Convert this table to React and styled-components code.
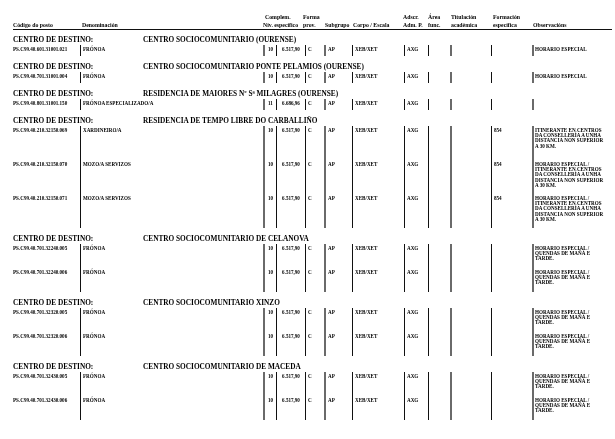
import React from "react";
import styled, { createGlobalStyle } from "styled-components";

const GlobalStyle = createGlobalStyle`
  html, body {
    margin: 0;
    padding: 0;
    background: #ffffff;
  }
  body {
    font-family: "Liberation Serif", "Times New Roman", serif;
    color: #000;
  }
`;

const COLS = "67px 183px 13px 29px 19px 28px 52px 24px 22px 41px 41px 1fr";

const Page = styled.div`
  width: 615px;
  box-sizing: border-box;
  padding: 13px 3px 0 13px;
  display: flex;
  flex-direction: column;
  gap: 4px;
  will-change: transform;
`;

const HeaderBar = styled.div`
  display: grid;
  grid-template-columns: 68px 182px 39px 22px 28px 51px 24px 24px 42px 39px 1fr;
  border-bottom: 1px solid #111;
  margin-bottom: -1px;
`;

const HeadCell = styled.div`
  height: 16px;
  display: flex;
  flex-direction: column;
  justify-content: flex-end;
  font-size: 5.8px;
  font-weight: bold;
  line-height: 8px;
  white-space: nowrap;
  padding-left: ${(p) => p.$pad || 0}px;
`;

const Section = styled.section`
  display: flex;
  flex-direction: column;
`;

const SectionTitle = styled.div`
  height: 12px;
  display: flex;
  align-items: center;
  font-family: "Liberation Serif", "Times New Roman", serif;
  font-size: 7.3px;
  font-weight: bold;
  white-space: nowrap;
`;

const TitleLabel = styled.span`
  width: 130px;
`;

const Row = styled.div`
  display: grid;
  grid-template-columns: ${COLS};
  height: ${(p) => p.$h}px;
  font-size: 5.1px;
  font-weight: bold;
  line-height: 5.4px;
`;

const Cell = styled.div`
  box-sizing: border-box;
  padding-top: 1.5px;
  padding-left: ${(p) => p.$pad || 0}px;
  text-align: ${(p) => p.$align || "left"};
  white-space: nowrap;
  border-left: ${(p) =>
    p.$bar === "double"
      ? "2px solid #6a6a6a"
      : p.$bar === "single"
      ? "1px solid #111"
      : "none"};
`;

const ObsText = styled.div`
  width: 14em;
  white-space: normal;
`;

const heads = [
  { top: "", bottom: "Código do posto" },
  { top: "", bottom: "Denominación", pad: 1 },
  { top: "Complem.", bottom: "Nív. específico", topPad: 2 },
  { top: "Forma", bottom: "prov.", pad: 1 },
  { top: "", bottom: "Subgrupo", pad: 1 },
  { top: "", bottom: "Corpo / Escala", pad: 1 },
  { top: "Adscr.", bottom: "Adm. P." },
  { top: "Área", bottom: "func.", pad: 1 },
  { top: "Titulación", bottom: "académica" },
  { top: "Formación", bottom: "específica" },
  { top: "", bottom: "Observacións", pad: 1 },
];

const ITIN =
  "ITINERANTE EN CENTROS DA CONSELLERÍA A UNHA DISTANCIA NON SUPERIOR A 30 KM.";
const QUEND = "HORARIO ESPECIAL / QUENDAS DE MAÑÁ E TARDE.";

const fronoa = (code, h = 24) => ({
  code,
  name: "FRÓNOA",
  niv: "10",
  comp: "6.517,90",
  form: "",
  obs: QUEND,
  h,
});

const sections = [
  {
    title: "CENTRO SOCIOCOMUNITARIO (OURENSE)",
    rows: [{ ...fronoa("PS.C99.40.601.31001.021", 11), obs: "HORARIO ESPECIAL" }],
  },
  {
    title: "CENTRO SOCIOCOMUNITARIO PONTE PELAMIOS (OURENSE)",
    rows: [{ ...fronoa("PS.C99.40.701.31001.004", 11), obs: "HORARIO ESPECIAL" }],
  },
  {
    title: "RESIDENCIA DE MAIORES Nº Sª MILAGRES (OURENSE)",
    rows: [
      {
        code: "PS.C99.40.801.31001.150",
        name: "FRÓNOA ESPECIALIZADO/A",
        niv: "11",
        comp: "6.686,96",
        form: "",
        obs: "",
        h: 11,
      },
    ],
  },
  {
    title: "RESIDENCIA DE TEMPO LIBRE DO CARBALLIÑO",
    rows: [
      { code: "PS.C99.40.210.32150.069", name: "XARDINEIRO/A", niv: "10", comp: "6.517,90", form: "854", obs: ITIN, h: 34 },
      { code: "PS.C99.40.210.32150.070", name: "MOZO/A SERVIZOS", niv: "10", comp: "6.517,90", form: "854", obs: "HORARIO ESPECIAL / " + ITIN, h: 34 },
      { code: "PS.C99.40.210.32150.071", name: "MOZO/A SERVIZOS", niv: "10", comp: "6.517,90", form: "854", obs: "HORARIO ESPECIAL / " + ITIN, h: 34 },
    ],
  },
  {
    title: "CENTRO SOCIOCOMUNITARIO DE CELANOVA",
    rows: [fronoa("PS.C99.40.701.32240.005"), fronoa("PS.C99.40.701.32240.006")],
  },
  {
    title: "CENTRO SOCIOCOMUNITARIO XINZO",
    rows: [fronoa("PS.C99.40.701.32320.005"), fronoa("PS.C99.40.701.32320.006")],
  },
  {
    title: "CENTRO SOCIOCOMUNITARIO DE MACEDA",
    rows: [fronoa("PS.C99.40.701.32430.005"), fronoa("PS.C99.40.701.32430.006")],
  },
];

const PostRow = ({ r }) => (
  <Row $h={r.h}>
    <Cell>{r.code}</Cell>
    <Cell $bar="single" $pad={2}>{r.name}</Cell>
    <Cell $bar="double" $align="center">{r.niv}</Cell>
    <Cell $bar="single" $align="center">{r.comp}</Cell>
    <Cell $bar="single" $pad={2}>C</Cell>
    <Cell $bar="double" $pad={2}>AP</Cell>
    <Cell $bar="single" $pad={2}>XEB/XET</Cell>
    <Cell $bar="single" $pad={2}>AXG</Cell>
    <Cell $bar="single" />
    <Cell $bar="double" />
    <Cell $bar="single" $pad={2}>{r.form}</Cell>
    <Cell $bar="double" $pad={1}>
      <ObsText>{r.obs}</ObsText>
    </Cell>
  </Row>
);

export default function App() {
  return (
    <>
      <GlobalStyle />
      <Page>
        <HeaderBar>
          {heads.map((h) => (
            <HeadCell key={h.bottom} $pad={h.pad}>
              <span style={{ paddingLeft: h.topPad || 0 }}>{h.top}</span>
              <span>{h.bottom}</span>
            </HeadCell>
          ))}
        </HeaderBar>
        {sections.map((s) => (
          <Section key={s.title}>
            <SectionTitle>
              <TitleLabel>CENTRO DE DESTINO:</TitleLabel>
              {s.title}
            </SectionTitle>
            {s.rows.map((r) => (
              <PostRow key={r.code} r={r} />
            ))}
          </Section>
        ))}
      </Page>
    </>
  );
}
